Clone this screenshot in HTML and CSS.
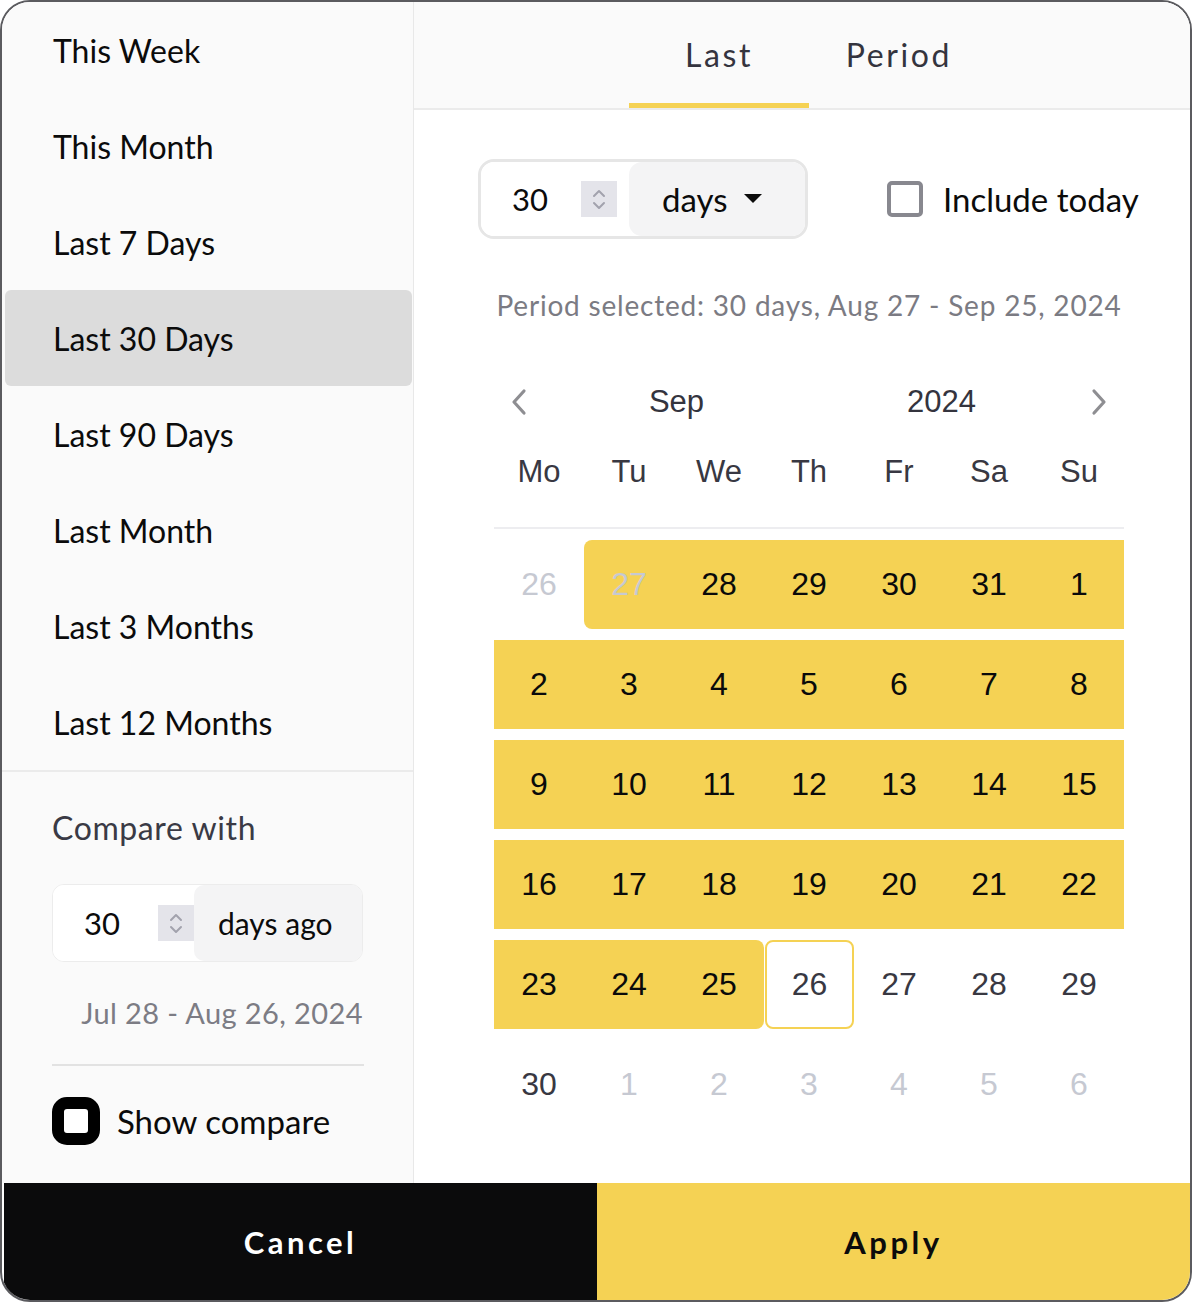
FILE: index.html
```html
<!DOCTYPE html>
<html lang="en">
<head>
<meta charset="utf-8">
<title>Date range picker</title>
<link rel="stylesheet" href="styles.css">
</head>
<body>
<div class="picker">
  <div class="main">
    <aside class="sidebar">
      <ul class="presets">
        <li class="preset">This Week</li>
        <li class="preset">This Month</li>
        <li class="preset">Last 7 Days</li>
        <li class="preset is-active">Last 30 Days</li>
        <li class="preset">Last 90 Days</li>
        <li class="preset">Last Month</li>
        <li class="preset">Last 3 Months</li>
        <li class="preset">Last 12 Months</li>
      </ul>
      <div class="compare">
        <div class="compare-title">Compare with</div>
        <div class="num-group num-group-small">
          <div class="num-field">
            <span class="num-value">30</span>
            <span class="spinner"><svg width="36" height="36" viewBox="0 0 36 36"><polyline points="13 15 18 10 23 15" fill="none" stroke="#a2a2ad" stroke-width="2" stroke-linecap="round" stroke-linejoin="round"/><polyline points="13 22 18 27 23 22" fill="none" stroke="#a2a2ad" stroke-width="2" stroke-linecap="round" stroke-linejoin="round"/></svg></span>
          </div>
          <div class="num-unit">days ago</div>
        </div>
        <div class="compare-range">Jul 28 - Aug 26, 2024</div>
        <div class="compare-divider"></div>
        <label class="show-compare"><span class="thick-box"></span><span>Show compare</span></label>
      </div>
    </aside>
    <section class="panel">
      <nav class="tabs">
        <div class="tab is-active">Last</div>
        <div class="tab">Period</div>
      </nav>
      <div class="panel-body">
        <div class="controls">
          <div class="num-group num-group-large">
            <div class="num-field">
              <span class="num-value">30</span>
              <span class="spinner"><svg width="36" height="36" viewBox="0 0 36 36"><polyline points="13 15 18 10 23 15" fill="none" stroke="#a2a2ad" stroke-width="2" stroke-linecap="round" stroke-linejoin="round"/><polyline points="13 22 18 27 23 22" fill="none" stroke="#a2a2ad" stroke-width="2" stroke-linecap="round" stroke-linejoin="round"/></svg></span>
            </div>
            <div class="num-unit">days<svg class="caret" width="18" height="10" viewBox="0 0 18 10"><polygon points="0 0 18 0 9 9" fill="#0b0b0b"/></svg></div>
          </div>
          <label class="include"><span class="box"></span><span>Include today</span></label>
        </div>
        <p class="period-info">Period selected: 30 days, Aug 27 - Sep 25, 2024</p>
        <div class="calendar">
          <div class="cal-nav">
            <span class="chev"><svg width="18" height="28" viewBox="0 0 18 28"><polyline points="14 3 4 14 14 25" fill="none" stroke="#8e8e92" stroke-width="3.2" stroke-linecap="round" stroke-linejoin="round"/></svg></span>
            <span class="cal-label">Sep</span>
            <span class="cal-label">2024</span>
            <span class="chev"><svg width="18" height="28" viewBox="0 0 18 28"><polyline points="4 3 14 14 4 25" fill="none" stroke="#8e8e92" stroke-width="3.2" stroke-linecap="round" stroke-linejoin="round"/></svg></span>
          </div>
          <div class="weekdays">
            <span>Mo</span><span>Tu</span><span>We</span><span>Th</span><span>Fr</span><span>Sa</span><span>Su</span>
          </div>
          <div class="days">
            <span class="day muted">26</span>
            <span class="day muted in-range range-start">27</span>
            <span class="day in-range">28</span>
            <span class="day in-range">29</span>
            <span class="day in-range">30</span>
            <span class="day in-range">31</span>
            <span class="day in-range">1</span>
            <span class="day in-range">2</span>
            <span class="day in-range">3</span>
            <span class="day in-range">4</span>
            <span class="day in-range">5</span>
            <span class="day in-range">6</span>
            <span class="day in-range">7</span>
            <span class="day in-range">8</span>
            <span class="day in-range">9</span>
            <span class="day in-range">10</span>
            <span class="day in-range">11</span>
            <span class="day in-range">12</span>
            <span class="day in-range">13</span>
            <span class="day in-range">14</span>
            <span class="day in-range">15</span>
            <span class="day in-range">16</span>
            <span class="day in-range">17</span>
            <span class="day in-range">18</span>
            <span class="day in-range">19</span>
            <span class="day in-range">20</span>
            <span class="day in-range">21</span>
            <span class="day in-range">22</span>
            <span class="day in-range">23</span>
            <span class="day in-range">24</span>
            <span class="day in-range range-end">25</span>
            <span class="day today">26</span>
            <span class="day">27</span>
            <span class="day">28</span>
            <span class="day">29</span>
            <span class="day">30</span>
            <span class="day muted">1</span>
            <span class="day muted">2</span>
            <span class="day muted">3</span>
            <span class="day muted">4</span>
            <span class="day muted">5</span>
            <span class="day muted">6</span>
          </div>
        </div>
      </div>
    </section>
  </div>
  <div class="actions">
    <button class="btn btn-cancel" type="button">Cancel</button>
    <button class="btn btn-apply" type="button">Apply</button>
  </div>
</div>
</body>
</html>
```

FILE: styles.css
```css
* { box-sizing: border-box; }

html, body {
  margin: 0;
  padding: 0;
  background: #ffffff;
}

.picker {
  width: 1192px;
  height: 1302px;
  border: 2px solid #5b5b5f;
  border-radius: 30px;
  overflow: hidden;
  display: flex;
  flex-direction: column;
  background: #ffffff;
  font-family: Lato, "Noto Sans", sans-serif;
  color: #0b0b0b;
}

.main {
  flex: 1;
  display: flex;
  min-height: 0;
}

/* ---------- Sidebar ---------- */
.sidebar {
  width: 412px;
  flex: none;
  background: #fafafa;
  border-right: 1px solid #e8e8e8;
  display: flex;
  flex-direction: column;
}

.presets {
  list-style: none;
  margin: 0;
  padding: 0;
}

.preset {
  height: 96px;
  margin: 0 1px 0 3px;
  padding-left: 48px;
  display: flex;
  align-items: center;
  font-size: 32px;
  color: #0b0b0b;
  border-radius: 6px;
}

.preset.is-active {
  background: #dcdcdc;
}

.compare {
  border-top: 2px solid #ebebeb;
  padding: 0 48px 0 50px;
}

.compare-title {
  margin-top: 36px;
  height: 40px;
  line-height: 40px;
  font-size: 32px;
  letter-spacing: 0.6px;
  color: #3a3a45;
}

.num-group {
  display: flex;
  overflow: hidden;
  background: #ffffff;
}

.num-group-small {
  margin-top: 36px;
  width: 311px;
  height: 78px;
  border: 1px solid #ececec;
  border-radius: 12px;
}

.num-field {
  display: flex;
  align-items: center;
  background: #ffffff;
}

.num-group-small .num-field {
  width: 141px;
  padding-left: 31px;
}

.num-value {
  font-size: 31px;
  color: #0b0b0b;
}

.spinner {
  margin-left: auto;
  width: 36px;
  height: 36px;
  background: #e4e4ea;
  display: block;
}

.spinner svg { display: block; }

.num-unit {
  flex: 1;
  display: flex;
  align-items: center;
  background: #f4f4f5;
  font-size: 30px;
  color: #0b0b0b;
}

.num-group-small .num-unit {
  padding-left: 24px;
  border-radius: 10px 0 0 10px;
}

.compare-range {
  margin-top: 33px;
  height: 36px;
  line-height: 36px;
  text-align: right;
  font-size: 29px;
  letter-spacing: 0.4px;
  color: #7c7c84;
  padding-right: 2px;
}

.compare-divider {
  margin-top: 33px;
  height: 2px;
  background: #e2e2e2;
  width: 312px;
}

.show-compare {
  margin-top: 31px;
  display: flex;
  align-items: center;
  gap: 17px;
  font-size: 33px;
  color: #0b0b0b;
}

.thick-box {
  width: 48px;
  height: 48px;
  border: 12px solid #000000;
  border-radius: 15px;
  background: #ffffff;
  flex: none;
}

/* ---------- Panel ---------- */
.panel {
  flex: 1;
  display: flex;
  flex-direction: column;
  background: #ffffff;
}

.tabs {
  height: 108px;
  flex: none;
  background: #fafafa;
  border-bottom: 2px solid #ebebeb;
  display: flex;
  padding-left: 215px;
}

.tab {
  width: 180px;
  display: flex;
  align-items: center;
  justify-content: center;
  padding-top: 4px;
  font-size: 32px;
  letter-spacing: 2.6px;
  color: #34343e;
  border-bottom: 5px solid transparent;
}

.tab.is-active {
  border-bottom-color: #f5d254;
}

.panel-body {
  padding: 49px 0 0 64px;
}

.controls {
  display: flex;
  align-items: center;
}

.num-group-large {
  width: 330px;
  height: 80px;
  border: 3px solid #e6e6e6;
  border-radius: 16px;
}

.num-group-large .num-field {
  width: 148px;
  padding-left: 31px;
  padding-right: 12px;
}

.num-group-large .num-unit {
  padding-left: 33px;
  font-size: 33px;
  border-radius: 13px 0 0 13px;
}

.caret {
  margin-left: 16px;
  display: block;
}

.include {
  margin-left: 79px;
  display: flex;
  align-items: center;
  gap: 20px;
  font-size: 33px;
  color: #0b0b0b;
}

.include .box {
  width: 36px;
  height: 36px;
  border: 4px solid #88888f;
  border-radius: 5px;
  background: #ffffff;
  flex: none;
}

.period-info {
  margin: 48px 0 0 16px;
  width: 630px;
  height: 36px;
  line-height: 36px;
  text-align: center;
  font-size: 28px;
  letter-spacing: 0.8px;
  color: #7b7b83;
  white-space: nowrap;
}

/* ---------- Calendar ---------- */
.calendar {
  margin: 54px 0 0 16px;
  width: 630px;
  font-family: "Liberation Sans", Arial, sans-serif;
}

.cal-nav {
  height: 50px;
  display: grid;
  grid-template-columns: 50px 1fr 1fr 50px;
  align-items: center;
  justify-items: center;
}

.cal-label {
  font-size: 31px;
  color: #34343e;
}

.chev svg { display: block; }

.weekdays {
  margin-top: 20px;
  height: 82px;
  padding-bottom: 30px;
  border-bottom: 2px solid #ededf0;
  display: grid;
  grid-template-columns: repeat(7, 90px);
  align-items: center;
  justify-items: center;
  font-size: 31px;
  color: #383842;
}

.days {
  margin-top: 11px;
  display: grid;
  grid-template-columns: repeat(7, 90px);
  grid-auto-rows: 89px;
  row-gap: 11px;
}

.day {
  display: flex;
  align-items: center;
  justify-content: center;
  font-size: 32px;
  color: #383842;
}

.day.in-range {
  background: #f5d254;
  color: #0a0a0a;
}

.day.muted { color: #c6c9d2; }

.day.range-start { border-radius: 8px 0 0 8px; }

.day.range-end { border-radius: 0 8px 8px 0; }

.day.today {
  border: 2px solid #f5d254;
  border-radius: 8px;
  margin-left: 1px;
}

/* ---------- Actions ---------- */
.actions {
  height: 117px;
  flex: none;
  display: flex;
  padding-left: 2px;
}

.btn {
  flex: 1;
  border: none;
  margin: 0;
  font-family: Lato, "Noto Sans", sans-serif;
  font-size: 31px;
  font-weight: 700;
  letter-spacing: 3.5px;
  cursor: pointer;
}

.btn-cancel {
  background: #0b0b0c;
  color: #ffffff;
}

.btn-apply {
  background: #f5d254;
  color: #0b0b0b;
}
```
